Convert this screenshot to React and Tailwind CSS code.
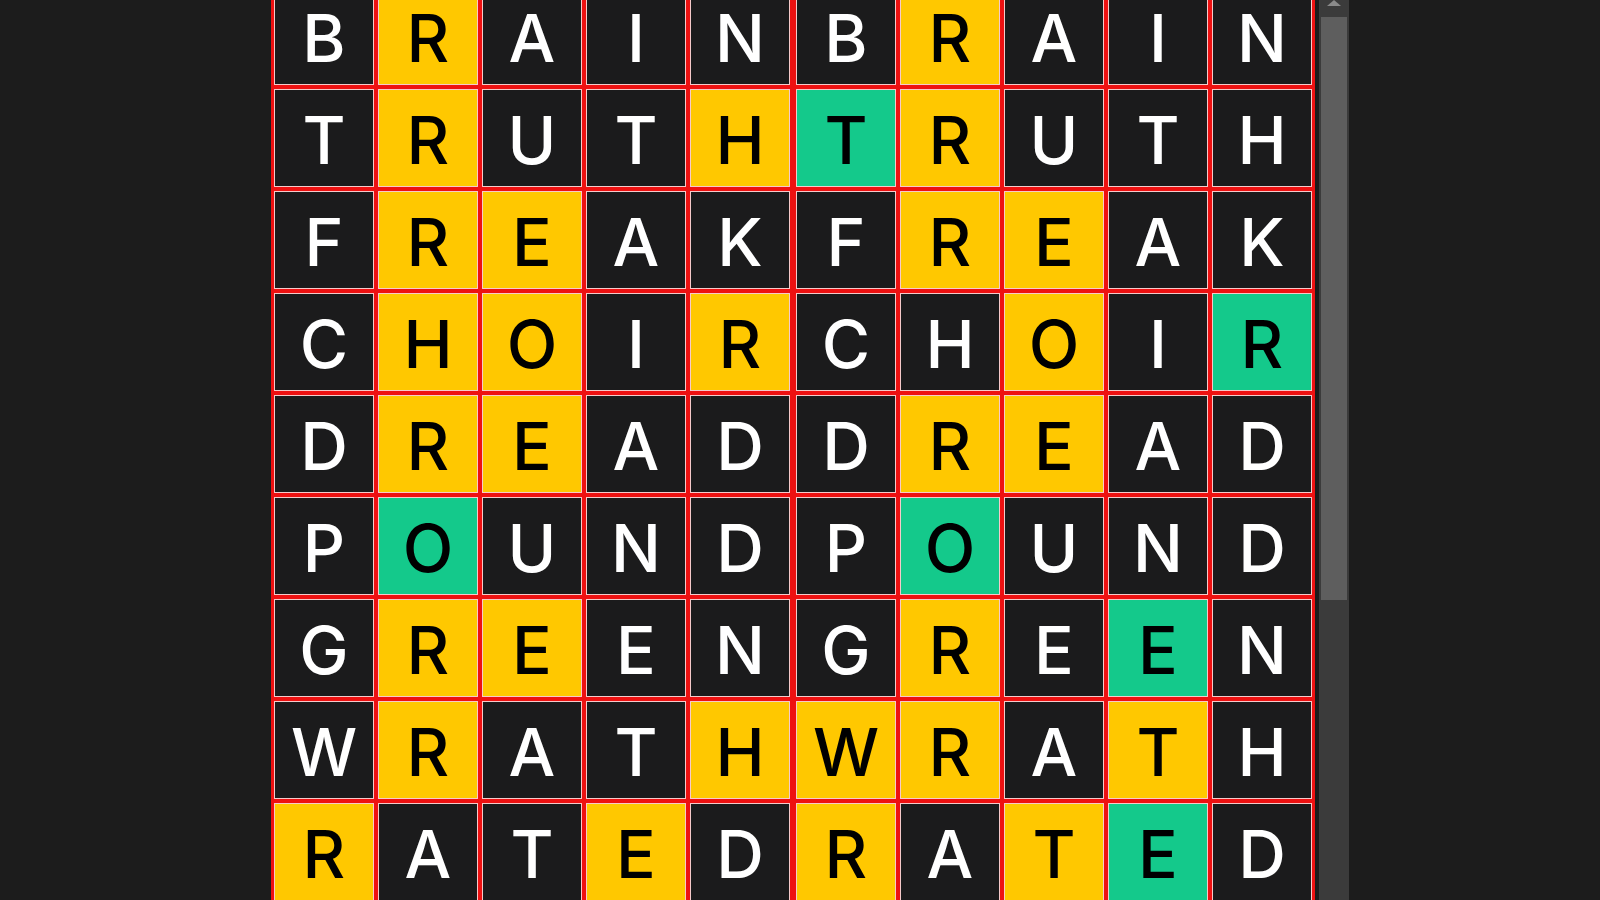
import React from "react";

// D = absent, Y = present, G = correct
const LEFT = [
  ["BRAIN", "DYDDD"],
  ["TRUTH", "DYDDY"],
  ["FREAK", "DYYDD"],
  ["CHOIR", "DYYDY"],
  ["DREAD", "DYYDD"],
  ["POUND", "DGDDD"],
  ["GREEN", "DYYDD"],
  ["WRATH", "DYDDY"],
  ["RATED", "YDDYD"],
];

const RIGHT = [
  ["BRAIN", "DYDDD"],
  ["TRUTH", "GYDDD"],
  ["FREAK", "DYYDD"],
  ["CHOIR", "DDYDG"],
  ["DREAD", "DYYDD"],
  ["POUND", "DGDDD"],
  ["GREEN", "DYDGD"],
  ["WRATH", "YYDYD"],
  ["RATED", "YDYGD"],
];

const tileClass = {
  D: "bg-[#1b1b1c] text-white",
  Y: "bg-[#ffc800] text-black",
  G: "bg-[#14c98b] text-black",
};

function Tile({ letter, state }) {
  return (
    <div
      className={`w-[100px] h-[98px] border border-[#f6caca] flex items-center justify-center pt-[4px] text-[66px] font-medium leading-none ${tileClass[state]}`}
    >
      {letter}
    </div>
  );
}

function Board({ rows }) {
  return (
    <div className="bg-[#ee1111] p-[3px] grid grid-cols-5 gap-[4px]">
      {rows.map(([word, states], r) =>
        word.split("").map((ch, i) => (
          <Tile key={`${r}-${i}`} letter={ch} state={states[i]} />
        ))
      )}
    </div>
  );
}

function Scrollbar() {
  return (
    <div className="w-[30px] ml-[4px] h-[900px] bg-[#3b3b3b] flex flex-col">
      <div className="h-[17px] flex items-start justify-center">
        <div className="w-0 h-0 border-l-[7px] border-r-[7px] border-b-[6px] border-l-transparent border-r-transparent border-b-[#8a8a8a]" />
      </div>
      <div className="mx-[2px] h-[583px] bg-[#5e5e5e]" />
    </div>
  );
}

export default function App() {
  return (
    <div
      className="w-[1600px] h-[900px] overflow-hidden bg-[#1c1c1c] flex items-start pl-[271px]"
      style={{ fontFamily: "Inter, 'Noto Sans', sans-serif" }}
    >
      <div className="flex -mt-[16px]">
        <Board rows={LEFT} />
        <Board rows={RIGHT} />
      </div>
      <Scrollbar />
    </div>
  );
}
